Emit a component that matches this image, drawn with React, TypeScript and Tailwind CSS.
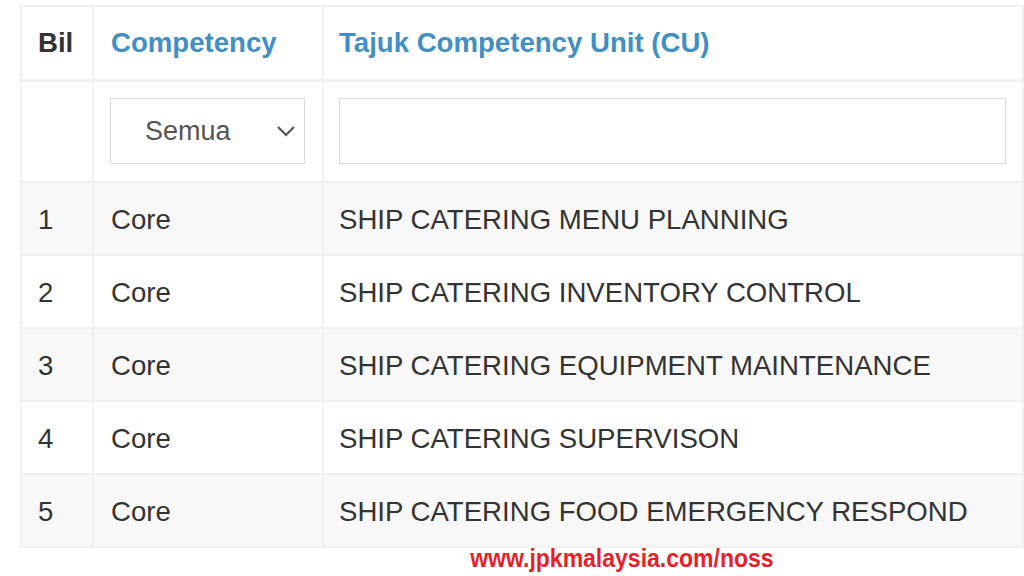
import React from "react";

const rows = [
  { n: "1", c: "Core", t: "SHIP CATERING MENU PLANNING" },
  { n: "2", c: "Core", t: "SHIP CATERING INVENTORY CONTROL" },
  { n: "3", c: "Core", t: "SHIP CATERING EQUIPMENT MAINTENANCE" },
  { n: "4", c: "Core", t: "SHIP CATERING SUPERVISON" },
  { n: "5", c: "Core", t: "SHIP CATERING FOOD EMERGENCY RESPOND" },
];

export default function App() {
  return (
    <div
      className="relative w-[1024px] h-[576px] overflow-hidden bg-white text-[#333333]"
      style={{ fontFamily: "'Liberation Sans', Arial, sans-serif" }}
    >
      <div className="pt-[5px] pl-[20px]">
        <table className="w-[1004px] table-fixed border-collapse text-[27.6px] leading-none">
          <colgroup>
            <col className="w-[72px]" />
            <col className="w-[230px]" />
            <col />
          </colgroup>
          <thead>
            <tr className="h-[74px]">
              <th className="border-2 border-b-[3px] border-[#f0f0f0] pl-[16px] pt-[1px] text-left font-bold text-[#333333]">
                Bil
              </th>
              <th className="border-2 border-b-[3px] border-[#f0f0f0] pl-[17px] pt-[1px] text-left font-bold text-[#428fc3]">
                Competency
              </th>
              <th className="border-2 border-b-[3px] border-[#f0f0f0] pl-[15px] pt-[1px] text-left font-bold text-[#428fc3]">
                Tajuk Competency Unit (CU)
              </th>
            </tr>
          </thead>
          <tbody>
            <tr className="h-[102px]">
              <td className="border-2 border-[#f0f0f0]" />
              <td className="border-2 border-[#f0f0f0] pl-[16px] pr-[16px]">
                <div className="flex h-[66px] w-[195px] items-center justify-between border border-[#d9dce3] bg-white pl-[34px] pr-[8px] text-[27px] text-[#555555]">
                  <span>Semua</span>
                  <svg width="20" height="12" viewBox="0 0 20 12" fill="none">
                    <path d="M2 2 L10 10 L18 2" stroke="#555555" strokeWidth="2.2" />
                  </svg>
                </div>
              </td>
              <td className="border-2 border-[#f0f0f0] pl-[15px] pr-[16px]">
                <div className="h-[66px] w-full border border-[#d9dce3] bg-white" />
              </td>
            </tr>
            {rows.map((r, i) => (
              <tr key={r.n} className={`h-[73px] ${i % 2 === 0 ? "bg-[#f8f8f8]" : "bg-white"}`}>
                <td className="border-2 border-[#f0f0f0] pl-[16px] pt-[3px]">{r.n}</td>
                <td className="border-2 border-[#f0f0f0] pl-[17px] pt-[3px]">{r.c}</td>
                <td className="border-2 border-[#f0f0f0] pl-[15px] pt-[3px] whitespace-nowrap">{r.t}</td>
              </tr>
            ))}
          </tbody>
        </table>
      </div>
      <div className="absolute left-[336px] top-[548px] flex h-[28px] w-[572px] items-start justify-center bg-white">
        <span className="inline-block scale-x-[0.92] text-[25px] font-bold leading-none text-[#e81f2a] -mt-[2px]">
          www.jpkmalaysia.com/noss
        </span>
      </div>
    </div>
  );
}
